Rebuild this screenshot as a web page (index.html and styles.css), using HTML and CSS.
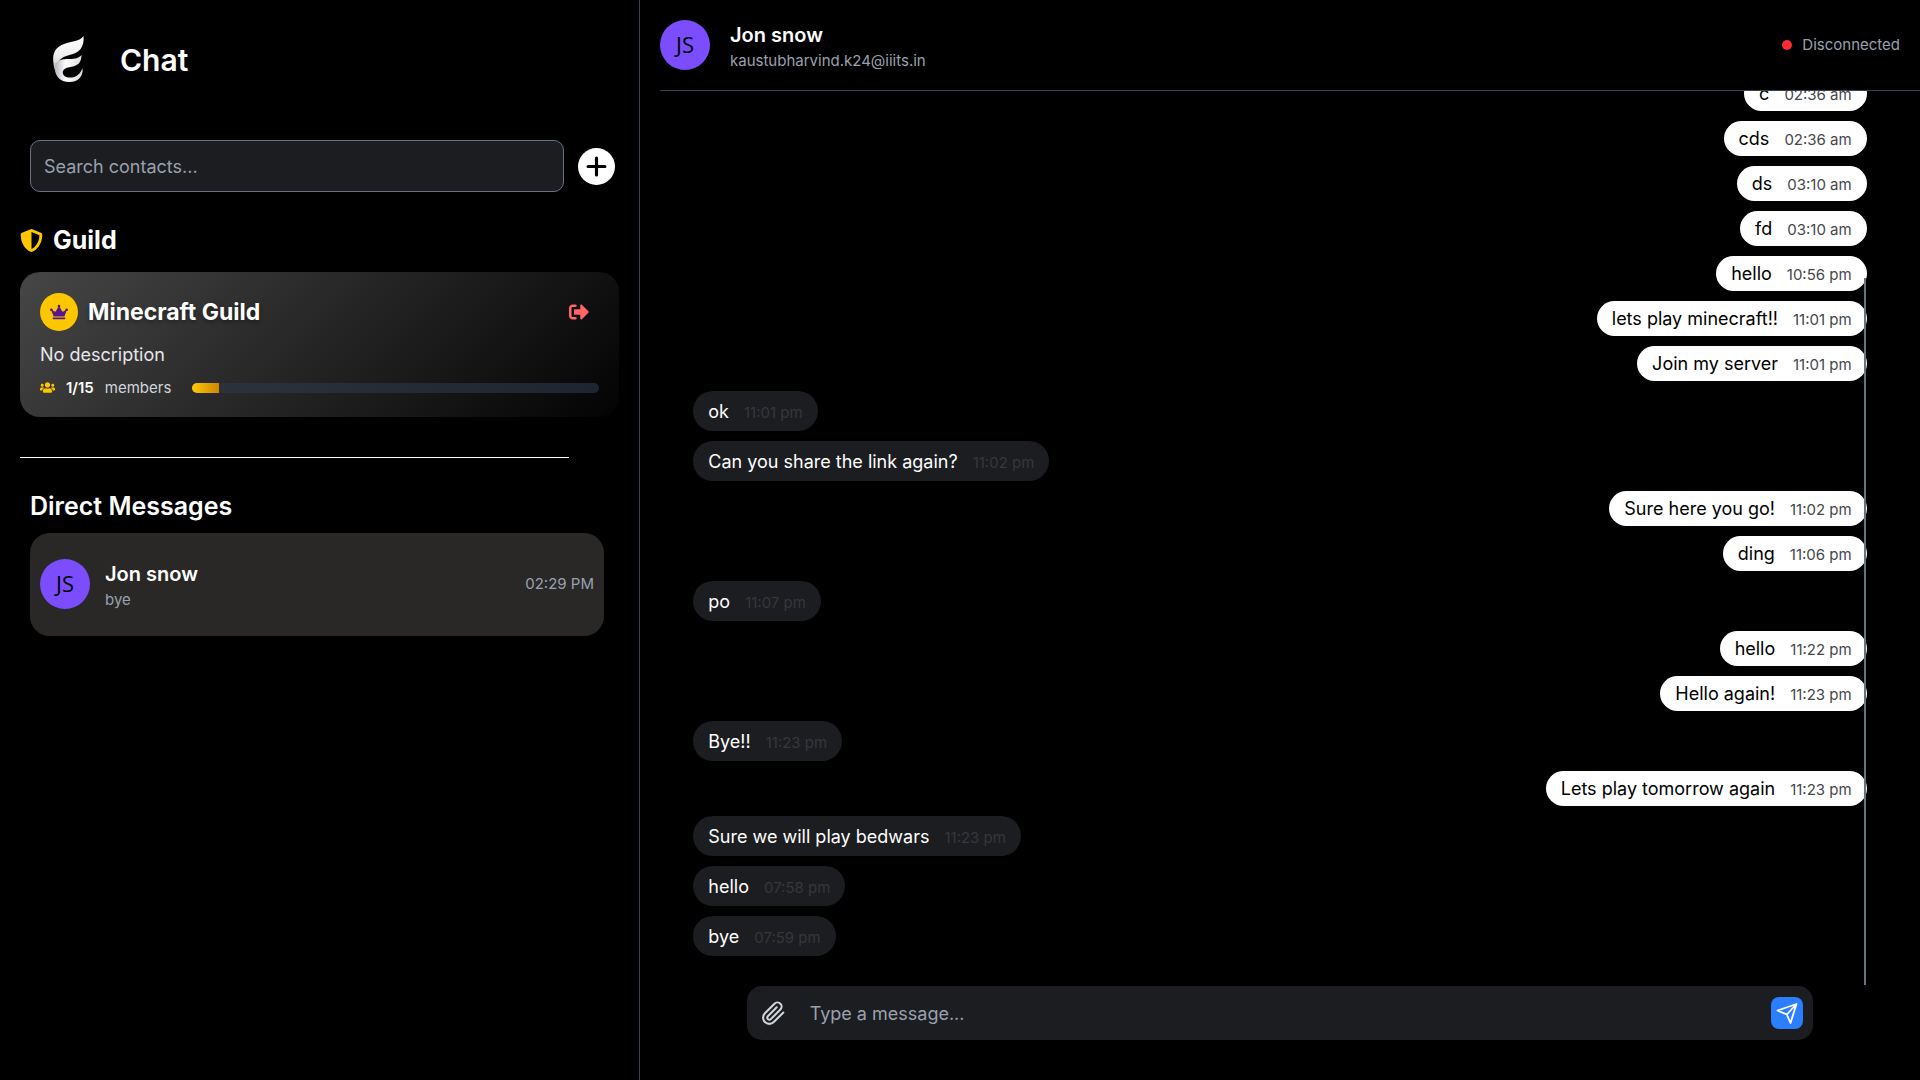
FILE: index.html
```html
<!DOCTYPE html>
<html lang="en">
<head>
    <meta charset="UTF-8">
    <meta name="viewport" content="width=device-width, initial-scale=1.0">
    <title>Chat</title>
    <link rel="stylesheet" href="styles.css">
</head>
<body>
    <div class="app">
        <!-- Sidebar -->
        <aside class="sidebar">
            <header class="brand">
                <svg class="logo" viewBox="0 0 32 48" aria-hidden="true">
                    <defs>
                        <linearGradient id="logoTop" x1="0" y1="0" x2="0" y2="1">
                            <stop offset="0" stop-color="#ffffff"/>
                            <stop offset="0.6" stop-color="#eeeeee"/>
                            <stop offset="1" stop-color="#b9b9c0"/>
                        </linearGradient>
                        <linearGradient id="logoBottom" x1="0" y1="0" x2="1" y2="0">
                            <stop offset="0" stop-color="#b4b4bc"/>
                            <stop offset="0.4" stop-color="#ffffff"/>
                            <stop offset="1" stop-color="#d8d8dc"/>
                        </linearGradient>
                    </defs>
                    <path fill="url(#logoTop)" d="M31 1C27 7 17 6 9 10C1 14 0 21 1 28C1 31 2 34 3 36C4 27 8 22 17 20C27 18 32 12 31 1Z"/>
                    <path fill="url(#logoBottom)" d="M2 30C4 25 10 24 17 24C23 24 26 23 29 20C29 28 25 31 18 32C11 33 9 36 11 40C13 43 18 43 22 42C26 40 28 38 30 33C31 41 26 47 17 47C6 47 2 40 2 30Z"/>
                </svg>
                <h1>Chat</h1>
            </header>

            <form class="search">
                <input type="text" aria-label="Search contacts" placeholder="Search contacts...">
                <button type="button" class="add" aria-label="Add contact">
                    <svg viewBox="0 0 20 20" fill="none" stroke="#000" stroke-width="3" stroke-linecap="round"><path d="M10 2v16M2 10h16"/></svg>
                </button>
            </form>

            <section class="guild">
                <h2>
                    <svg class="shield" viewBox="0 0 512 512" fill="currentColor"><path d="M466.5 83.700l-192-80a48.150 48.150 0 0 0-36.900 0l-192 80C27.700 91.100 16 108.600 16 128c0 198.500 114.500 335.700 221.500 380.300 11.800 4.900 25.100 4.900 36.900 0C360.100 472.600 496 349.300 496 128c0-19.400-11.700-36.900-29.500-44.300zM256.100 446.300l-.1-381 175.900 73.300c-3.300 151.400-82.100 261.100-175.800 307.700z"/></svg>
                    Guild
                </h2>
                <article class="guild-card">
                    <div class="guild-head">
                        <span class="crown">
                            <svg viewBox="0 0 640 512" fill="currentColor"><path d="M528 448H112c-8.800 0-16 7.200-16 16v32c0 8.800 7.200 16 16 16h416c8.800 0 16-7.200 16-16v-32c0-8.800-7.200-16-16-16zm64-320c-26.500 0-48 21.500-48 48 0 7.100 1.600 13.700 4.400 19.800L476 239.200c-15.400 9.200-35.300 4-44.200-11.600L350.300 85C361 76.200 368 63 368 48c0-26.500-21.500-48-48-48s-48 21.500-48 48c0 15 7 28.200 17.700 37l-81.500 142.600c-8.900 15.600-28.900 20.800-44.200 11.600l-72.300-43.400c2.700-6 4.400-12.700 4.400-19.800 0-26.500-21.500-48-48-48S0 149.500 0 176s21.500 48 48 48c2.600 0 5.200-.4 7.700-.8L128 416h384l72.300-192.800c2.500.4 5.100.8 7.700.8 26.500 0 48-21.500 48-48s-21.500-48-48-48z"/></svg>
                        </span>
                        <h3>Minecraft Guild</h3>
                        <button type="button" class="leave" aria-label="Leave guild">
                            <svg viewBox="0 0 512 512" fill="currentColor"><path d="M497 273L329 441c-15 15-41 4.500-41-17v-96H152c-13.300 0-24-10.700-24-24v-96c0-13.300 10.700-24 24-24h136V88c0-21.400 25.900-32 41-17l168 168c9.300 9.400 9.300 24.600 0 34zM192 436v-40c0-6.600-5.400-12-12-12H96c-17.700 0-32-14.300-32-32V160c0-17.700 14.300-32 32-32h84c6.600 0 12-5.400 12-12V76c0-6.600-5.400-12-12-12H96c-53 0-96 43-96 96v192c0 53 43 96 96 96h84c6.600 0 12-5.400 12-12z"/></svg>
                        </button>
                    </div>
                    <p class="guild-desc">No description</p>
                    <div class="members">
                        <svg viewBox="0 0 640 512" fill="currentColor"><path d="M96 224c35.300 0 64-28.700 64-64s-28.700-64-64-64-64 28.700-64 64 28.700 64 64 64zm448 0c35.300 0 64-28.700 64-64s-28.700-64-64-64-64 28.700-64 64 28.700 64 64 64zm32 32h-64c-17.600 0-33.500 7.100-45.100 18.600 40.300 22.100 68.900 62 75.100 109.400h66c17.700 0 32-14.300 32-32v-32c0-35.300-28.700-64-64-64zm-256 0c61.900 0 112-50.100 112-112S381.900 32 320 32 208 82.100 208 144s50.100 112 112 112zm76.800 32h-8.300c-20.800 10-43.900 16-68.500 16s-47.600-6-68.500-16h-8.300C179.600 288 128 339.600 128 403.200V432c0 26.500 21.500 48 48 48h288c26.500 0 48-21.500 48-48v-28.800c0-63.600-51.600-115.200-115.200-115.200zm-223.700-13.400C161.500 263.100 145.600 256 128 256H64c-35.300 0-64 28.700-64 64v32c0 17.700 14.300 32 32 32h65.900c6.300-47.400 34.900-87.300 75.200-109.400z"/></svg>
                        <strong>1/15</strong>
                        <span>members</span>
                        <div class="bar"><div class="bar-fill"></div></div>
                    </div>
                </article>
            </section>

            <hr>

            <section class="direct">
                <h2>Direct Messages</h2>
                <article class="contact">
                    <span class="avatar">JS</span>
                    <div class="who">
                        <h3>Jon snow</h3>
                        <p>bye</p>
                    </div>
                    <time>02:29 PM</time>
                </article>
            </section>
        </aside>

        <!-- Conversation -->
        <main class="chat">
            <header class="chat-head">
                <span class="avatar">JS</span>
                <div class="who">
                    <h3>Jon snow</h3>
                    <p>kaustubharvind.k24@iiits.in</p>
                </div>
                <p class="status">Disconnected</p>
            </header>

            <div class="messages">
                <div class="msg sent">c <time>02:36 am</time></div>
                <div class="msg sent">cds <time>02:36 am</time></div>
                <div class="msg sent">ds <time>03:10 am</time></div>
                <div class="msg sent">fd <time>03:10 am</time></div>
                <div class="msg sent">hello <time>10:56 pm</time></div>
                <div class="msg sent">lets play minecraft!! <time>11:01 pm</time></div>
                <div class="msg sent">Join my server <time>11:01 pm</time></div>
                <div class="msg received">ok <time>11:01 pm</time></div>
                <div class="msg received">Can you share the link again? <time>11:02 pm</time></div>
                <div class="msg sent">Sure here you go! <time>11:02 pm</time></div>
                <div class="msg sent">ding <time>11:06 pm</time></div>
                <div class="msg received">po <time>11:07 pm</time></div>
                <div class="msg sent">hello <time>11:22 pm</time></div>
                <div class="msg sent">Hello again! <time>11:23 pm</time></div>
                <div class="msg received">Bye!! <time>11:23 pm</time></div>
                <div class="msg sent">Lets play tomorrow again <time>11:23 pm</time></div>
                <div class="msg received">Sure we will play bedwars <time>11:23 pm</time></div>
                <div class="msg received">hello <time>07:58 pm</time></div>
                <div class="msg received">bye <time>07:59 pm</time></div>
                <span class="scroll-thumb"></span>
            </div>

            <form class="composer">
                <button type="button" class="attach" aria-label="Attach file">
                    <svg viewBox="0 0 24 24" fill="none" stroke="currentColor" stroke-width="2" stroke-linecap="round" stroke-linejoin="round"><path d="m21.440 11.050-9.190 9.190a6 6 0 0 1-8.490-8.490l9.190-9.190a4 4 0 0 1 5.660 5.660l-9.200 9.190a2 2 0 0 1-2.830-2.830l8.490-8.480"/></svg>
                </button>
                <input type="text" aria-label="Message" placeholder="Type a message...">
                <button type="button" class="send" aria-label="Send">
                    <svg viewBox="0 0 24 24" fill="none" stroke="currentColor" stroke-width="1.8" stroke-linejoin="round"><path d="M21.500 3 2.500 9.500l9.300 4 3.700 8.500 6-19ZM21.500 3l-9.700 10.500"/></svg>
                </button>
            </form>
        </main>
    </div>
</body>
</html>
```

FILE: styles.css
```css
* {
    box-sizing: border-box;
    margin: 0;
    padding: 0;
}

body {
    background: #000;
    color: #fff;
    font-family: Inter, sans-serif;
    font-size: 18px;
}

svg {
    display: block;
}

button,
input {
    font: inherit;
    border: none;
}

button {
    cursor: pointer;
    display: flex;
    align-items: center;
    justify-content: center;
}

input {
    min-width: 0;
    color: #fff;
    outline: none;
}

input::placeholder {
    color: #99a1af;
}

.app {
    display: flex;
    height: 100vh;
}

/* Sidebar */
.sidebar {
    width: 33.3333%;
    padding: 0 20px;
    border-right: 1px solid #364153;
}

.brand {
    display: flex;
    align-items: center;
    gap: 35px;
    height: 120px;
    padding: 0 0 2px 32px;
}

.logo {
    width: 33px;
    height: 48px;
}

.brand h1 {
    font-size: 30px;
    font-weight: 600;
    padding-top: 2px;
}

.search {
    display: flex;
    align-items: center;
    gap: 14px;
    padding: 20px 4px 20px 10px;
}

.search input {
    flex: 1;
    height: 52px;
    padding: 0 13px;
    background: #1c1d21;
    border: 1px solid #6a7282;
    border-radius: 10px;
}

.add {
    width: 37px;
    height: 37px;
    border-radius: 50%;
    background: #fff;
}

.add svg {
    width: 21px;
    height: 21px;
}

.guild h2 {
    display: flex;
    align-items: center;
    gap: 10px;
    height: 60px;
    font-size: 25px;
    font-weight: 700;
    line-height: 35px;
    padding-bottom: 4px;
}

.shield {
    width: 23px;
    height: 23px;
    color: #fdc700;
}

.guild-card {
    padding: 20px;
    height: 145px;
    border-radius: 20px;
    background: linear-gradient(135deg, #464646 0%, #030303 100%);
}

.guild-head {
    display: flex;
    align-items: center;
    gap: 10px;
}

.crown {
    display: flex;
    align-items: center;
    justify-content: center;
    width: 38px;
    height: 38px;
    border-radius: 50%;
    background: #fdc700;
    color: #59168b;
}

.crown svg {
    width: 18px;
    height: 18px;
}

.guild-head h3 {
    flex: 1;
    font-size: 23px;
    font-weight: 700;
    text-shadow: 0 2px 4px rgba(0, 0, 0, 0.4);
}

.leave {
    padding: 10px;
    background: none;
    color: #ff6467;
}

.leave svg {
    width: 20px;
    height: 20px;
}

.guild-desc {
    margin: 10px 0 8px;
    line-height: 25px;
    color: #e5e7eb;
}

.members {
    display: flex;
    align-items: center;
    gap: 11px;
    font-size: 15px;
    line-height: 25px;
    color: #d1d5dc;
}

.members svg {
    width: 15px;
    height: 15px;
    color: #fdc700;
}

.members strong {
    font-weight: 600;
    color: #fff;
}

.bar {
    flex: 1;
    height: 10px;
    margin-left: 10px;
    border-radius: 5px;
    overflow: hidden;
    background: linear-gradient(90deg, #2c333d, #1e2530);
}

.bar-fill {
    width: 6.6667%;
    height: 100%;
    background: linear-gradient(90deg, #fdc700, #d08700);
}

hr {
    width: 549px;
    max-width: 100%;
    margin: 40px 0 31px;
    border: none;
    border-top: 1px solid #fff;
}

.direct {
    padding: 0 15px 0 10px;
}

.direct h2 {
    font-size: 25px;
    font-weight: 600;
    line-height: 35px;
    margin-bottom: 9px;
}

.contact {
    display: flex;
    align-items: center;
    gap: 15px;
    height: 103px;
    padding: 0 10px 2px;
    border-radius: 20px;
    background: #292827;
}

.avatar {
    display: flex;
    align-items: center;
    justify-content: center;
    width: 50px;
    height: 50px;
    padding-bottom: 2px;
    border-radius: 50%;
    background: #7c4dff;
    color: #000;
    font-family: "Open Sans", sans-serif;
    font-size: 22px;
}

.who {
    flex: 1;
    padding-top: 4px;
}

.who h3 {
    font-size: 20px;
    font-weight: 600;
    line-height: 28px;
}

.who p,
.contact time,
.status {
    font-size: 15px;
    line-height: 24px;
    color: #99a1af;
}

/* Conversation */
.chat {
    flex: 1;
    min-width: 0;
    display: flex;
    flex-direction: column;
    align-items: center;
    padding-bottom: 40px;
}

.chat-head {
    display: flex;
    align-items: center;
    gap: 20px;
    align-self: stretch;
    height: 91px;
    margin-left: 20px;
    padding-right: 20px;
    border-bottom: 1px solid #364153;
}

.status {
    display: flex;
    align-items: center;
    gap: 10px;
}

.status::before {
    content: "";
    width: 10px;
    height: 10px;
    border-radius: 50%;
    background: #fb2c36;
}

.messages {
    flex: 1;
    min-height: 0;
    position: relative;
    display: flex;
    flex-direction: column;
    justify-content: flex-end;
    gap: 10px;
    width: 91.6667%;
    padding-bottom: 30px;
    overflow: hidden;
}

.msg {
    display: flex;
    flex-shrink: 0;
    align-items: center;
    gap: 15px;
    padding: 0 15px;
    border-radius: 20px;
}

.msg time {
    font-size: 15px;
    padding-top: 2px;
    color: #45474b;
}

.sent {
    align-self: flex-end;
    height: 35px;
    background: #fff;
    color: #000;
}

.received {
    align-self: flex-start;
    height: 40px;
    background: #1c1d21;
}

.received time {
    color: #36373b;
}

/* custom scroll bar drawn over the bubbles */
.scroll-thumb {
    position: absolute;
    right: 1px;
    bottom: 1px;
    width: 2px;
    height: 79%;
    background: #6a7282;
}

.composer {
    display: flex;
    align-items: center;
    width: 83.3333%;
    height: 54px;
    padding: 0 10px 0 14px;
    border-radius: 15px;
    background: #1c1d21;
}

.composer input {
    flex: 1;
    height: 100%;
    padding: 0 24px;
    background: none;
}

.attach {
    background: none;
    color: #d1d5dc;
}

.attach svg {
    width: 25px;
    height: 25px;
}

.send {
    width: 32px;
    height: 32px;
    border-radius: 8px;
    background: #2b7fff;
    color: #fff;
}

.send svg {
    width: 24px;
    height: 24px;
}
```
